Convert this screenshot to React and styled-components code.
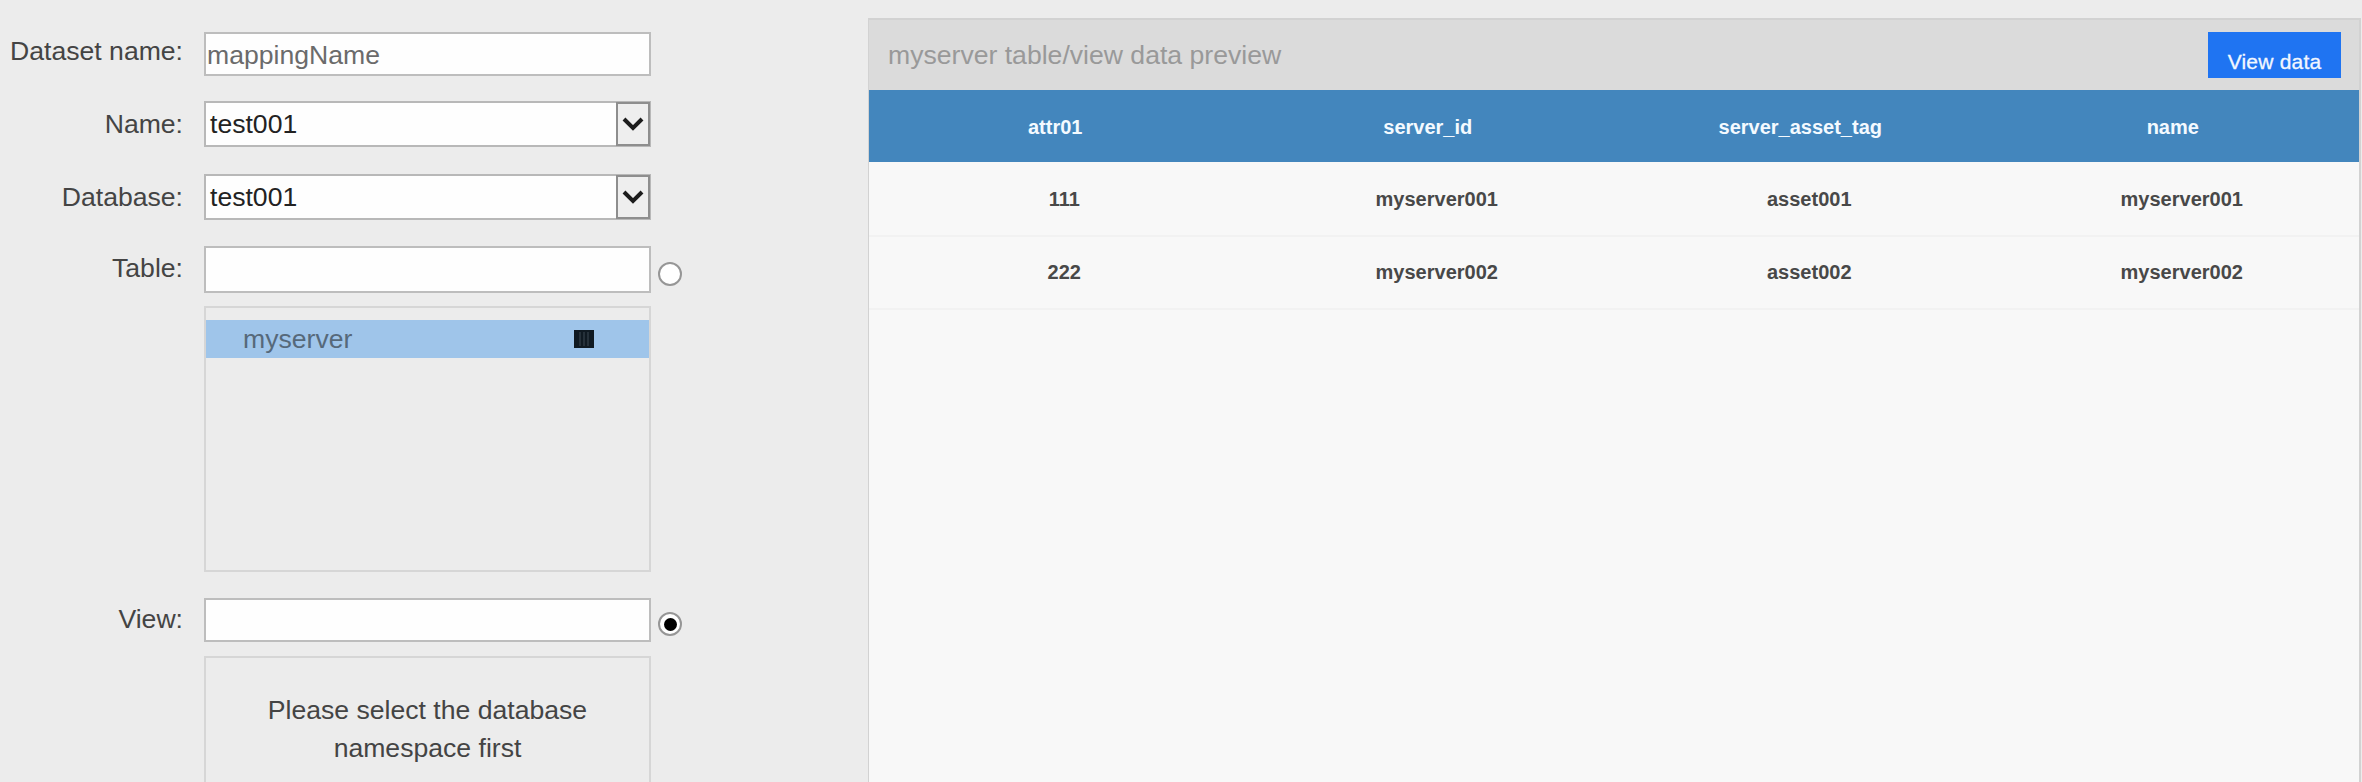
import React from "react";
import styled, { createGlobalStyle } from "styled-components";

const Global = createGlobalStyle`
  * { box-sizing: border-box; }
  body { margin: 0; background: #ececec; font-family: "Liberation Sans", Arial, sans-serif; }
`;

const Page = styled.div`
  display: flex;
  width: 100%;
  height: 782px;
  overflow: hidden;
  background: #ececec;
  color: #444;
  font-size: 26.6px;
`;

const Form = styled.form`
  flex: none;
  width: 868px;
  padding-top: 32px;
`;

const Row = styled.div`
  display: flex;
  align-items: flex-start;
  height: ${(p) => p.$height}px;
`;

const Label = styled.label`
  width: 183px;
  margin: ${(p) => p.$drop}px 21px 0 0;
  line-height: 30px;
  text-align: right;
  white-space: nowrap;
`;

const Input = styled.input`
  width: 447px;
  height: ${(p) => p.$height}px;
  padding: 2px 2px 0 1px;
  border: 2px solid #bdbdbd;
  border-radius: 0;
  outline: none;
  background: #fefefe;
  font: 26.6px "Liberation Sans", Arial, sans-serif;
  color: #6b6b6b;
  &::placeholder { color: #6b6b6b; opacity: 1; }
`;

const Select = styled.div`
  display: flex;
  width: 447px;
  height: 46px;
  border: 2px solid #b8b8b8;
  background: #fefefe;
  color: #222;
`;

const SelectValue = styled.span`
  flex: 1;
  padding-left: 4px;
  font-size: 26.6px;
  line-height: 42px;
`;

const Arrow = styled.span`
  display: flex;
  align-items: center;
  justify-content: center;
  width: 34px;
  height: 44px;
  margin: -1px -1px 0 0;
  border: 2px solid #8e8e8e;
  background: #eeeeee;
`;

const Radio = styled.span`
  display: flex;
  align-items: center;
  justify-content: center;
  width: 24px;
  height: 24px;
  margin: ${(p) => p.$drop}px 0 0 7px;
  border: 2px solid #969696;
  border-radius: 50%;
  background: #fff;
`;

const RadioDot = styled.span`
  width: 13px;
  height: 13px;
  border-radius: 50%;
  background: #000;
`;

const ListBox = styled.div`
  width: 447px;
  height: ${(p) => p.$height}px;
  margin: 0 0 ${(p) => p.$gap || 0}px 204px;
  padding-top: 12px;
  border: 2px solid #d6d6d6;
`;

const ListItem = styled.div`
  display: flex;
  align-items: center;
  justify-content: space-between;
  height: 38px;
  padding: 0 55px 0 37px;
  background: #9fc5ea;
  color: #56697a;
  line-height: 38px;
`;

const Hint = styled.p`
  width: 340px;
  margin: 21px auto 0;
  line-height: 38px;
  text-align: center;
`;

const Preview = styled.section`
  flex: none;
  width: 1493px;
  height: 780px;
  margin-top: 18px;
  border: 2px solid #d2d2d2;
  border-width: 2px 2px 0 1px;
  background: #f8f8f8;
`;

const PreviewHeader = styled.header`
  display: flex;
  justify-content: space-between;
  align-items: flex-start;
  height: 70px;
  padding: 12px 18px 0 19px;
  background: #dbdbdb;
`;

const Title = styled.h2`
  margin: 8px 0 0;
  font-size: 26.6px;
  font-weight: 400;
  line-height: 30px;
  color: #999;
`;

const Button = styled.button`
  width: 133px;
  height: 46px;
  padding: 14px 0 0;
  border: 0;
  background: #1f74f2;
  color: #f2f7ff;
  font: 21px "Liberation Sans", Arial, sans-serif;
  letter-spacing: 0.2px;
  -webkit-text-stroke: 0.3px #f2f7ff;
`;

const TableRow = styled.div`
  display: grid;
  grid-template-columns: repeat(4, 1fr);
  font-size: 20px;
  font-weight: 700;
  text-align: center;
`;

const HeadRow = styled(TableRow)`
  height: 72px;
  background: #4386bd;
  color: #f4faff;
  line-height: 74px;
`;

const DataRow = styled(TableRow)`
  height: 73px;
  box-shadow: 0 2px 0 #f2f2f2;
  color: #484848;
  line-height: 75px;
`;

const Cell = styled.span`
  padding-left: ${(p) => (p.$body ? 18 : 0)}px;
`;

const columns = ["attr01", "server_id", "server_asset_tag", "name"];
const rows = [
  ["111", "myserver001", "asset001", "myserver001"],
  ["222", "myserver002", "asset002", "myserver002"],
];

function SelectBox({ value }) {
  return (
    <Select>
      <SelectValue>{value}</SelectValue>
      <Arrow>
        <svg width="22" height="16" viewBox="0 0 22 16">
          <path d="M2 3 L11 12 L20 3" fill="none" stroke="#1c1c1c" strokeWidth="4" />
        </svg>
      </Arrow>
    </Select>
  );
}

export default function App() {
  return (
    <Page>
      <Global />
      <Form>
        <Row $height={69}>
          <Label $drop={4}>Dataset name:</Label>
          <Input $height={44} placeholder="mappingName" />
        </Row>
        <Row $height={73}>
          <Label $drop={8}>Name:</Label>
          <SelectBox value="test001" />
        </Row>
        <Row $height={72}>
          <Label $drop={8}>Database:</Label>
          <SelectBox value="test001" />
        </Row>
        <Row $height={60}>
          <Label $drop={7}>Table:</Label>
          <Input $height={47} />
          <Radio $drop={16} />
        </Row>
        <ListBox $height={266} $gap={26}>
          <ListItem>
            myserver
            <svg width="20" height="18" viewBox="0 0 20 18">
              <rect width="20" height="18" fill="#101a22" />
              <path d="M6 2V16M10 2V16M14 2V16" stroke="#3c4852" strokeWidth="1" />
            </svg>
          </ListItem>
        </ListBox>
        <Row $height={58}>
          <Label $drop={6}>View:</Label>
          <Input $height={44} />
          <Radio $drop={14}>
            <RadioDot />
          </Radio>
        </Row>
        <ListBox $height={266}>
          <Hint>Please select the database namespace first</Hint>
        </ListBox>
      </Form>
      <Preview>
        <PreviewHeader>
          <Title>myserver table/view data preview</Title>
          <Button type="button">View data</Button>
        </PreviewHeader>
        <HeadRow>{columns.map((c) => <Cell key={c}>{c}</Cell>)}</HeadRow>
        {rows.map((r) => (
          <DataRow key={r[0]}>
            {r.map((c, i) => <Cell $body key={i}>{c}</Cell>)}
          </DataRow>
        ))}
      </Preview>
    </Page>
  );
}
